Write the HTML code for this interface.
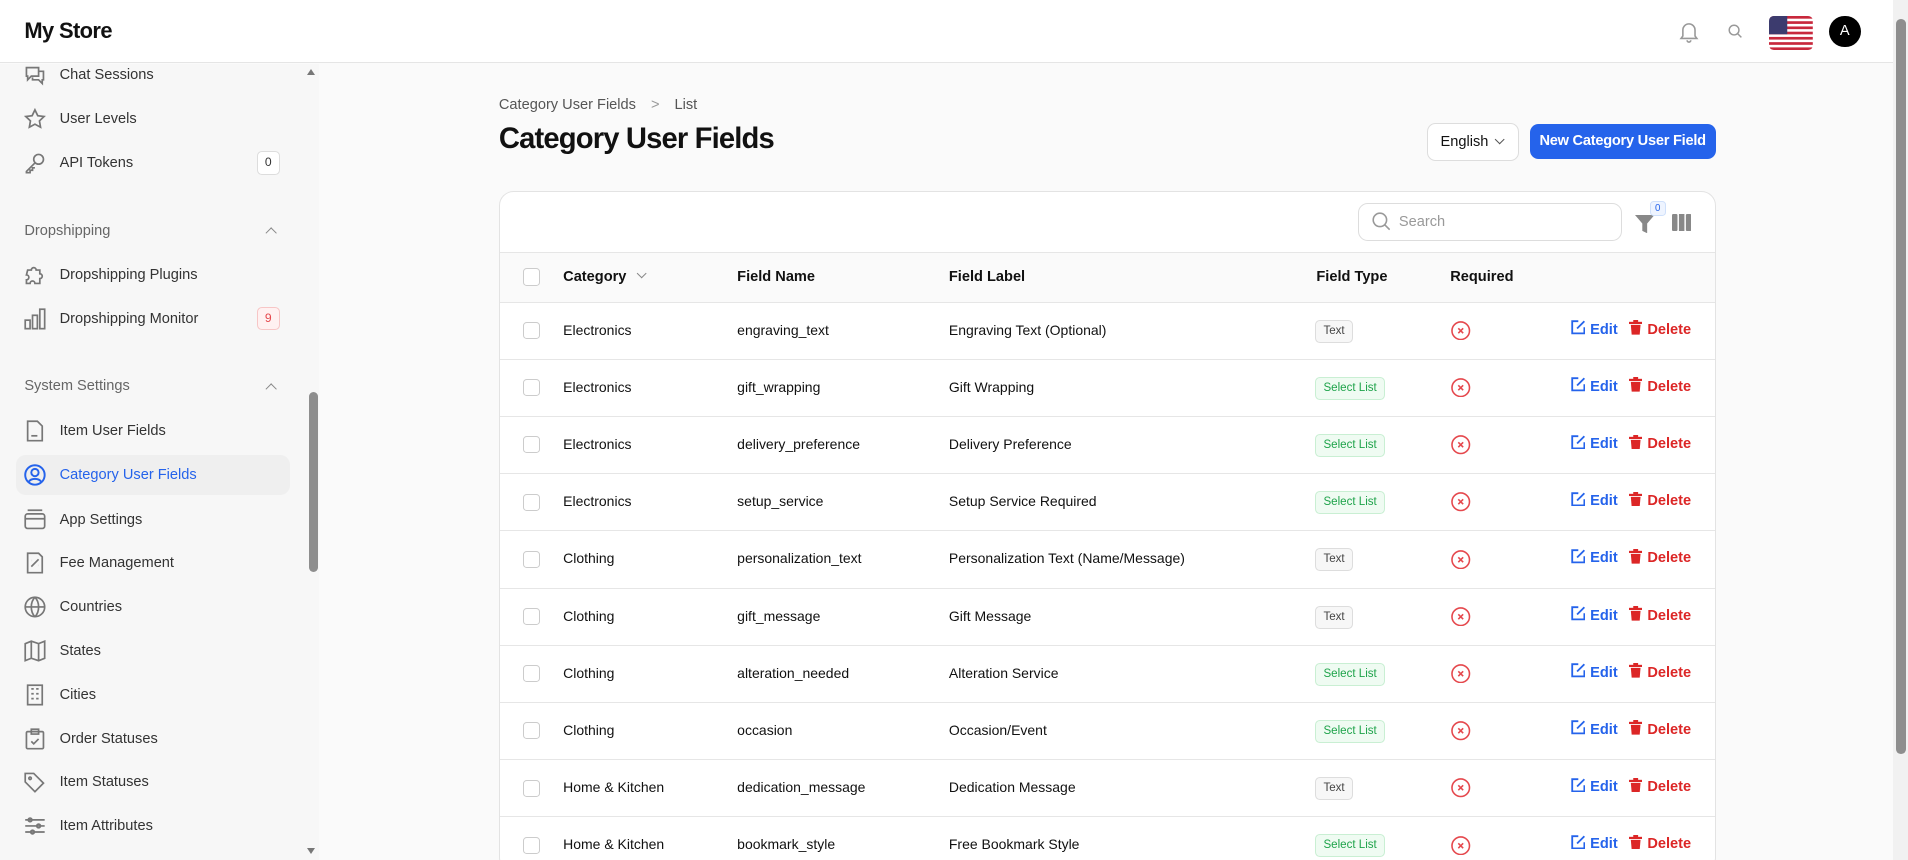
<!DOCTYPE html>
<html><head><meta charset="utf-8"><style>
*{box-sizing:border-box;margin:0;padding:0}
html,body{width:1908px;height:860px;overflow:hidden;background:#fafafa}
#z{zoom:1.21684;width:1568px;height:707px;position:relative;font-family:"Liberation Sans",sans-serif;color:#111;overflow:hidden}
.top{position:absolute;left:0;top:0;width:1556px;height:52px;background:#fff;border-bottom:1px solid #e5e5e5}
.logo{position:absolute;left:20px;top:15px;font-size:18px;font-weight:bold;letter-spacing:-.5px}
.side{position:absolute;left:0;top:53px;width:262px;height:654px;background:#f7f7f7}
.sb{position:absolute;left:253px;top:53px;width:9px;height:654px;background:#f7f7f7}
.thumb{position:absolute;left:254px;top:322px;width:7px;height:148px;background:#8e8e8e;border-radius:4px}
.it{position:absolute;left:20px;height:34px;width:218px;display:flex;align-items:center;font-size:12px;color:#333}
.it svg{width:18px;height:18px;margin-right:11px;stroke:#777;fill:none;stroke-width:1.4}
.it.act{left:13px;padding-left:7px;background:#efefef;border-radius:8px;color:#2563eb;width:225px}
.it.act svg{stroke:#2563eb}
.sec{position:absolute;left:20px;font-size:12px;color:#666;width:210px}
.sec:after{content:"";position:absolute;right:4px;top:5px;width:6px;height:6px;border-left:1.3px solid #888;border-top:1.3px solid #888;transform:rotate(45deg)}
.bdg{position:absolute;right:8px;width:19px;height:19px;border:1px solid #ddd;border-radius:4px;font-size:10px;text-align:center;line-height:17px;background:#fff}
.card{position:absolute;left:410px;top:157px;width:1000px;height:560px;background:#fff;border:1px solid #e3e3e3;border-radius:12px;overflow:hidden}
.row{position:absolute;left:0;width:1000px;height:47px;border-top:1px solid #e6e6e6;font-size:11.5px}
.row>*{position:absolute;top:0;line-height:46px}
.cb{position:absolute;left:19px;top:16px!important;width:14px;height:14px;border:1px solid #ccc;border-radius:3px;background:#fff}
.tag{top:14px!important;line-height:17px!important;height:19px;padding:0 6px;font-size:9.5px;border-radius:4px;border:1px solid #ddd;background:#f7f7f7;color:#444}
.tag.g{background:#effbf2;border-color:#c9efd3;color:#1ea34a}
.x{top:15px!important;line-height:0!important}
.ed{color:#2563eb;font-weight:bold;font-size:12px}
.dl{color:#dc2626;font-weight:bold;font-size:12px}
</style></head><body><div id="z">
<div class="top"><div class="logo">My Store</div>
<svg style="position:absolute;left:1379px;top:16px" width="18" height="20" viewBox="0 0 18 20" fill="none" stroke="#999" stroke-width="1.3"><path d="M4 14V9a5 5 0 0 1 10 0v5l1.5 2h-13z"/><path d="M7.5 17.5a1.5 1.5 0 0 0 3 0"/></svg>
<svg style="position:absolute;left:1420px;top:20px" width="12" height="12" viewBox="0 0 12 12" fill="none" stroke="#999" stroke-width="1.2"><circle cx="5" cy="5" r="4"/><path d="M8 8l3 3"/></svg>
<svg style="position:absolute;left:1454px;top:13px;border-radius:4px" width="36" height="28" viewBox="0 0 36 28"><rect width="36" height="28" fill="#fff"/><g fill="#c8283c"><rect y="0" width="36" height="2.2"/><rect y="4.3" width="36" height="2.2"/><rect y="8.6" width="36" height="2.2"/><rect y="12.9" width="36" height="2.2"/><rect y="17.2" width="36" height="2.2"/><rect y="21.5" width="36" height="2.2"/><rect y="25.8" width="36" height="2.2"/></g><rect width="15" height="15" fill="#3c3b6e"/></svg>
<div style="position:absolute;left:1503px;top:13px;width:26px;height:26px;border-radius:50%;background:#000;color:#fff;font-size:12px;text-align:center;line-height:26px">A</div>
</div>
<div style="position:absolute;left:1556px;top:0;width:12px;height:707px;background:#f1f1f1"></div>
<div style="position:absolute;left:1558px;top:16px;width:8px;height:604px;background:#8e8e8e;border-radius:4px"></div>
<div class="side"></div><div class="sb"></div><div class="thumb"></div>
<div style="position:absolute;left:252px;top:57px;border:4px solid transparent;border-bottom:5px solid #777;border-top:0"></div>
<div style="position:absolute;left:252px;top:697px;border:4px solid transparent;border-top:5px solid #777;border-bottom:0"></div>

<div class="it" style="top:45px"><svg viewBox="0 0 18 18"><path d="M2 3h10v7H6l-3 3v-3H2z"/><path d="M12 6h4v7h-1v3l-3-3H7v-2"/></svg>Chat Sessions</div>
<div class="it" style="top:81px"><svg viewBox="0 0 18 18"><path d="M9 1.5l2.3 4.8 5.2.7-3.8 3.6.9 5.2L9 13.3l-4.6 2.5.9-5.2L1.5 7l5.2-.7z"/></svg>User Levels</div>
<div class="it" style="top:117px"><svg viewBox="0 0 18 18"><circle cx="12" cy="6" r="4"/><path d="M9 9l-7 7v1h3v-2h2v-2h2"/></svg>API Tokens<span class="bdg">0</span></div>
<div class="sec" style="top:183px">Dropshipping</div>
<div class="it" style="top:209px"><svg viewBox="0 0 18 18"><path d="M3 5h3a2 2 0 1 1 4 0h3v3a2 2 0 1 1 0 4v4H9a2 2 0 1 0-4 0H2v-3a2 2 0 1 0 0-4z"/></svg>Dropshipping Plugins</div>
<div class="it" style="top:245px"><svg viewBox="0 0 18 18"><rect x="1" y="10" width="4" height="7"/><rect x="7" y="6" width="4" height="11"/><rect x="13" y="1" width="4" height="16"/></svg>Dropshipping Monitor<span class="bdg" style="color:#e5484d;border-color:#f7c6c6;background:#fff1f1">9</span></div>
<div class="sec" style="top:311px">System Settings</div>
<div class="it" style="top:337px"><svg viewBox="0 0 18 18"><path d="M3 1h8l4 4v12H3z"/><path d="M6 13h5"/></svg>Item User Fields</div>
<div class="it act" style="top:374px;height:33px"><svg viewBox="0 0 18 18" style="stroke-width:1.6"><circle cx="9" cy="9" r="8"/><circle cx="9" cy="7" r="3"/><path d="M4 14.5c2-3 8-3 10 0"/></svg>Category User Fields</div>
<div class="it" style="top:410px"><svg viewBox="0 0 18 18"><rect x="1" y="4" width="16" height="12" rx="2"/><path d="M3 1h12M1 8h16"/></svg>App Settings</div>
<div class="it" style="top:446px"><svg viewBox="0 0 18 18"><path d="M3 1h9l3 3v13H3z"/><path d="M6 12l6-6M6.5 7h.1M11.5 11h.1"/></svg>Fee Management</div>
<div class="it" style="top:482px"><svg viewBox="0 0 18 18"><circle cx="9" cy="9" r="8"/><path d="M1 9h16M9 1c-4 4-4 12 0 16M9 1c4 4 4 12 0 16"/></svg>Countries</div>
<div class="it" style="top:518px"><svg viewBox="0 0 18 18"><path d="M1 3l5-2 6 2 5-2v14l-5 2-6-2-5 2zM6 1v14M12 3v14"/></svg>States</div>
<div class="it" style="top:554px"><svg viewBox="0 0 18 18"><rect x="3" y="1" width="12" height="16"/><path d="M6 4h2M10 4h2M6 8h2M10 8h2M6 12h2M10 12h2"/></svg>Cities</div>
<div class="it" style="top:590px"><svg viewBox="0 0 18 18"><rect x="2" y="3" width="14" height="14" rx="1"/><path d="M6 1h6v4H6zM6 11l2 2 4-4"/></svg>Order Statuses</div>
<div class="it" style="top:626px"><svg viewBox="0 0 18 18"><path d="M1 2v7l8 8 7-7-8-8z"/><circle cx="5" cy="6" r="1"/></svg>Item Statuses</div>
<div class="it" style="top:662px"><svg viewBox="0 0 18 18"><path d="M1 4h16M1 9h16M1 14h16"/><circle cx="5" cy="4" r="1.5"/><circle cx="12" cy="9" r="1.5"/><circle cx="7" cy="14" r="1.5"/></svg>Item Attributes</div>

<div style="position:absolute;left:410px;top:80px;font-size:12px;color:#555">Category User Fields <span style="margin:0 9px;color:#999">&gt;</span> List</div>
<div style="position:absolute;left:410px;top:101px;font-size:24px;font-weight:bold;letter-spacing:-.7px">Category User Fields</div>
<div style="position:absolute;left:1173px;top:101px;width:75px;height:31px;border:1px solid #ddd;border-radius:7px;background:#fff;font-size:12px;line-height:30px;padding-left:10px">English <span style="position:absolute;right:12px;top:10px;width:6px;height:6px;border-right:1.3px solid #555;border-bottom:1.3px solid #555;transform:rotate(45deg)"></span></div>
<div style="position:absolute;left:1257px;top:102px;width:153px;height:29px;background:#2563eb;border-radius:7px;color:#fff;font-size:12px;font-weight:bold;text-align:center;line-height:29px;letter-spacing:-.2px">New Category User Field</div>

<div class="card">
<div style="position:absolute;left:705px;top:9px;width:217px;height:31px;border:1px solid #ddd;border-radius:8px;font-size:12px;color:#999;line-height:30px;padding-left:33px">Search<svg style="position:absolute;left:11px;top:7px" width="15" height="15" viewBox="0 0 15 15" fill="none" stroke="#999" stroke-width="1.3"><circle cx="6.5" cy="6.5" r="5.5"/><path d="M10.5 10.5l4 4"/></svg></div>
<svg style="position:absolute;left:933px;top:19px" width="16" height="15" viewBox="0 0 16 15"><path d="M0 0h16l-6 7v8l-4-2V7z" fill="#888"/></svg>
<div style="position:absolute;left:945px;top:7px;width:13px;height:13px;border:1px solid #cfe0fb;border-radius:3px;background:#eef4ff;color:#2563eb;font-size:8px;text-align:center;line-height:11px">0</div>
<svg style="position:absolute;left:963px;top:18px" width="16" height="14" viewBox="0 0 16 14" fill="#888"><rect x="0" y="0" width="4.5" height="14" rx="1"/><rect x="5.7" y="0" width="4.5" height="14"/><rect x="11.4" y="0" width="4.5" height="14" rx="1"/></svg>
<div class="row" style="top:49px;height:41px;background:#fafafa;font-weight:bold;font-size:12px"><span class="cb" style="top:13px!important"></span><span style="left:52px;line-height:40px">Category <span style="display:inline-block;width:6px;height:6px;border-right:1.2px solid #888;border-bottom:1.2px solid #888;transform:rotate(45deg);margin:0 0 3px 6px"></span></span><span style="left:195px;line-height:40px">Field Name</span><span style="left:369px;line-height:40px">Field Label</span><span style="left:671px;line-height:40px">Field Type</span><span style="left:781px;line-height:40px">Required</span></div>
<div id="rows"></div>
</div>
<script>
var d=[["Electronics","engraving_text","Engraving Text (Optional)",0],["Electronics","gift_wrapping","Gift Wrapping",1],["Electronics","delivery_preference","Delivery Preference",1],["Electronics","setup_service","Setup Service Required",1],["Clothing","personalization_text","Personalization Text (Name/Message)",0],["Clothing","gift_message","Gift Message",0],["Clothing","alteration_needed","Alteration Service",1],["Clothing","occasion","Occasion/Event",1],["Home & Kitchen","dedication_message","Dedication Message",0],["Home & Kitchen","bookmark_style","Free Bookmark Style",1]];
var h="";d.forEach(function(r,i){h+='<div class="row" style="top:'+(90+i*47)+'px"><span class="cb"></span><span style="left:52px">'+r[0].replace("&","&amp;")+'</span><span style="left:195px">'+r[1]+'</span><span style="left:369px">'+r[2]+'</span><span class="tag'+(r[3]?' g':'')+'" style="left:670px">'+(r[3]?'Select List':'Text')+'</span><span class="x" style="left:782px"><svg width="16" height="16" viewBox="0 0 16 16" fill="none" stroke="#e5484d" stroke-width="1.3"><circle cx="8" cy="8" r="7.2"/><path d="M6 6l4 4M10 6l-4 4"/></svg></span><span class="ed" style="left:880px"><svg width="12" height="12" viewBox="0 0 12 12" fill="none" stroke="#2563eb" stroke-width="1.5" style="vertical-align:-1px;margin-right:4px"><path d="M6 1H1v10h10V6"/><path d="M5 7l6-6"/></svg>Edit</span><span class="dl" style="left:928px"><svg width="11" height="12" viewBox="0 0 11 12" fill="#dc2626" style="vertical-align:-1px;margin-right:4px"><rect x="0" y="1.5" width="11" height="1.8"/><rect x="3.5" y="0" width="4" height="2"/><path d="M1.5 4h8l-.7 8H2.2z"/></svg>Delete</span></div>'});
document.getElementById("rows").innerHTML=h;
</script>
</div></body></html>
